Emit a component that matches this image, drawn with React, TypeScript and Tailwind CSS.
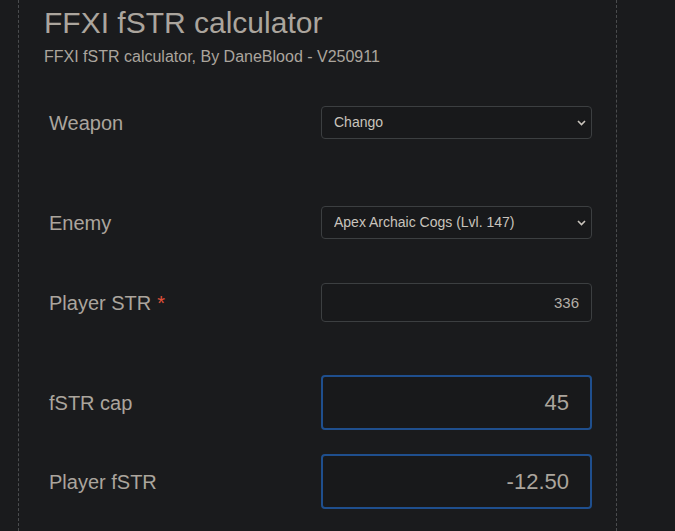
import React from "react";

const font = { fontFamily: '"Liberation Sans", Arial, sans-serif' };

function Chevron() {
  return (
    <svg
      width="9"
      height="6"
      viewBox="0 0 9 6"
      className="pointer-events-none absolute right-[6px] top-1/2 -translate-y-1/2"
    >
      <path d="M1 1l3.5 3.5L8 1" fill="none" stroke="#c9c4bd" strokeWidth="1.6" />
    </svg>
  );
}

function Row({
  label,
  required,
  className,
  children,
}: {
  label: string;
  required?: boolean;
  className?: string;
  children: React.ReactNode;
}) {
  return (
    <div className={"flex items-center " + (className ?? "")}>
      <label className="flex-1 pl-[5px] text-[20px] text-[#aba59d]">
        {label}
        {required && <span className="ml-[6px] text-[#e0513a]">*</span>}
      </label>
      <div className="relative w-[271px]">{children}</div>
    </div>
  );
}

const selectCls =
  "h-[33px] w-full appearance-none rounded-[4px] border border-[#3c3f41] bg-[#18191b] pl-[12px] font-['Liberation_Sans',Arial,sans-serif] text-[14px] text-[#c9c4bd] outline-none";

const bigInputCls =
  "h-[55px] w-full rounded-[4px] border-2 border-[#1f4f8e] bg-[#18191b] pr-[21px] text-right font-['Liberation_Sans',Arial,sans-serif] text-[22px] text-[#aba59d] outline-none";

export default function App() {
  return (
    <div className="min-h-screen bg-[#1a1b1d]" style={font}>
      <div className="ml-[18px] min-h-screen w-[599px] border-x border-dashed border-[#4a4c4e] pl-[25px] pr-[24px] pt-[5px]">
        <h1 className="text-[30px] leading-[36px] text-[#aba59d]">FFXI fSTR calculator</h1>
        <p className="mt-[4px] text-[16px] leading-[24px] text-[#aba59d]">
          FFXI fSTR calculator, By DaneBlood - V250911
        </p>

        <Row label="Weapon" className="mt-[37px]">
          <select className={selectCls}>
            <option>Chango</option>
          </select>
          <Chevron />
        </Row>

        <Row label="Enemy" className="mt-[67px]">
          <select className={selectCls}>
            <option>Apex Archaic Cogs (Lvl. 147)</option>
          </select>
          <Chevron />
        </Row>

        <Row label="Player STR" required className="mt-[44px]">
          <input
            defaultValue="336"
            className="h-[39px] w-full rounded-[4px] border border-[#3c3f41] bg-[#18191b] pr-[12px] text-right font-['Liberation_Sans',Arial,sans-serif] text-[15px] text-[#b5afa7] outline-none"
          />
        </Row>

        <Row label="fSTR cap" className="mt-[53px]">
          <input readOnly value="45" className={bigInputCls} />
        </Row>

        <Row label="Player fSTR" className="mt-[24px]">
          <input readOnly value="-12.50" className={bigInputCls} />
        </Row>
      </div>
    </div>
  );
}
